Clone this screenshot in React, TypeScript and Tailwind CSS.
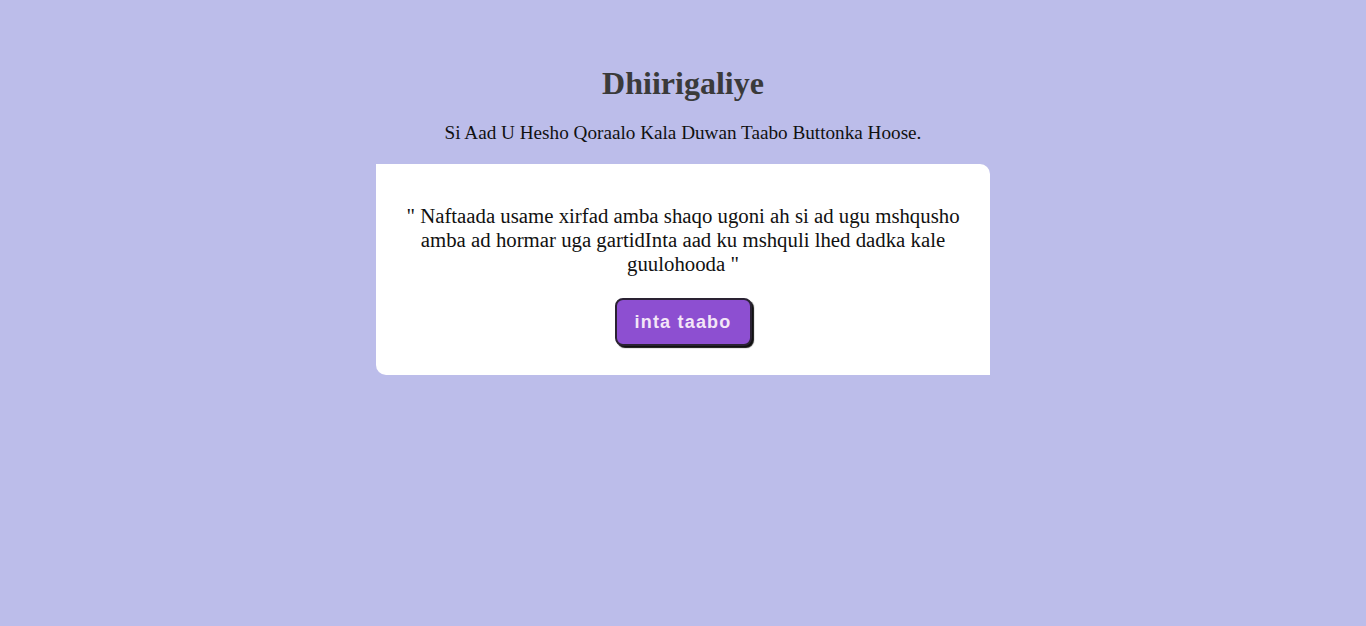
const App = () => {
  return (
    <div className="min-h-[626px] w-full bg-[#bcbdea] flex flex-col items-center pt-[65px] font-['Liberation_Serif',serif]">
      <h1 className="text-[32px] leading-[37px] font-bold text-[#3a3a3a]">Dhiirigaliye</h1>
      <p className="mt-[20px] text-[19.2px] leading-[22px] text-[#111]">
        Si Aad U Hesho Qoraalo Kala Duwan Taabo Buttonka Hoose.
      </p>
      <div className="mt-[20px] w-[614px] bg-white rounded-tr-[10px] rounded-bl-[10px] pt-[40px] pb-[29px] px-[24px] flex flex-col items-center">
        <p className="text-[20.8px] leading-[24px] text-center text-[#111]">
          " Naftaada usame xirfad amba shaqo ugoni ah si ad ugu mshqusho amba ad hormar uga gartidInta aad ku mshquli lhed dadka kale guulohooda "
        </p>
        <button className="mt-[22px] w-[137px] h-[48px] rounded-[8px] border-2 border-[#2a2233] bg-[#8d4fd1] shadow-[2px_2px_1px_#111] text-[#f3e6f7] font-['Liberation_Sans',sans-serif] font-bold text-[18px] tracking-[1.2px]">
          inta taabo
        </button>
      </div>
    </div>
  );
};

export default App;
